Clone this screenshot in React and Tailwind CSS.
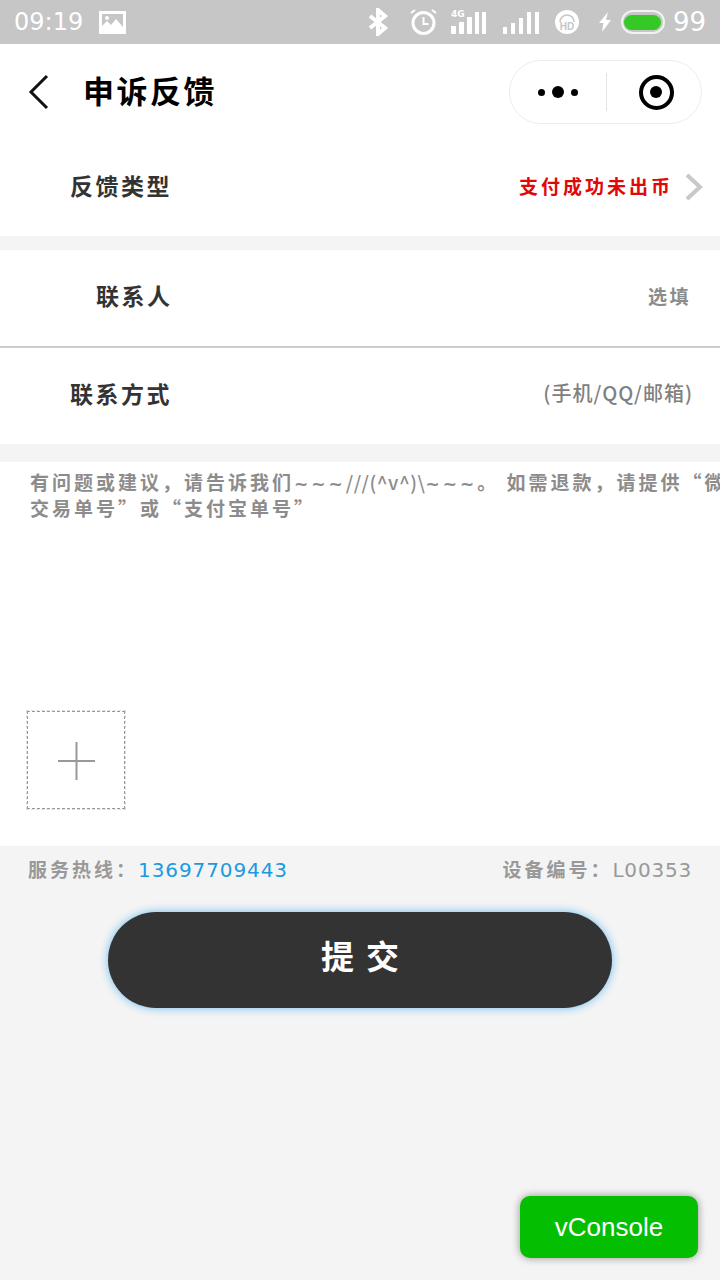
import React from "react";

const cjk = "font-['Noto_Sans_CJK_SC','Liberation_Sans',sans-serif]";
const latin = "font-['DejaVu_Sans','Liberation_Sans',sans-serif]";

const StatusIcons = () => (
  <div className="ml-auto flex items-center pr-[14px]">
    {/* bluetooth */}
    <svg width="20" height="28" viewBox="0 0 20 28" fill="none" stroke="#fff" strokeWidth="4">
      <path d="M2 8l15 12-7 6V2l7 6L2 20" />
    </svg>
    {/* alarm */}
    <svg width="27" height="28" viewBox="0 0 27 28" className="ml-[22px]" fill="none" stroke="#fff">
      <circle cx="13.5" cy="15" r="10.5" strokeWidth="3" />
      <path d="M13.5 9v7h5" strokeWidth="2" />
      <path d="M1 5l4-3M26 5l-4-3" strokeWidth="2" />
    </svg>
    {/* 4G signal */}
    <div className="relative ml-[14px] flex h-[24px] w-[38px] items-end gap-[3px]">
      <span className={`absolute left-0 top-[-2px] text-[9px] font-bold leading-[12px] text-white ${latin}`}>4G</span>
      <span className="h-[8px] w-[5px] bg-white"></span>
      <span className="h-[12px] w-[5px] bg-white"></span>
      <span className="h-[17px] w-[5px] bg-white"></span>
      <span className="h-[22px] w-[4px] bg-white"></span>
      <span className="h-[22px] w-[4px] bg-white"></span>
    </div>
    {/* signal */}
    <div className="ml-[14px] flex h-[24px] w-[36px] items-end gap-[4px]">
      <span className="h-[7px] w-[4px] bg-white"></span>
      <span className="h-[11px] w-[4px] bg-white"></span>
      <span className="h-[16px] w-[4px] bg-white"></span>
      <span className="h-[22px] w-[4px] bg-white"></span>
      <span className="h-[22px] w-[4px] bg-white"></span>
    </div>
    {/* HD call */}
    <svg width="24" height="24" viewBox="0 0 24 24" className="ml-[16px]">
      <circle cx="12" cy="12" r="12" fill="#fff" />
      <path d="M5 12a7 7 0 0 1 14 0" fill="none" stroke="#c6c6c6" strokeWidth="1.6" />
      <text x="12" y="20" textAnchor="middle" fontSize="10" fontWeight="700" fontFamily="Liberation Sans" fill="#c6c6c6">HD</text>
    </svg>
    {/* charging */}
    <svg width="12" height="20" viewBox="0 0 12 20" className="ml-[20px]" fill="#fff">
      <path d="M9 0L0 11h4.5L3 20l9-12H7z" />
    </svg>
    <div className="ml-[10px] flex h-[24px] w-[44px] items-center justify-center rounded-full border-2 border-[#eef4ee]">
      <div className="h-[15px] w-[37px] rounded-full bg-[#35c928]"></div>
    </div>
    <span className={`ml-[8px] text-[26px] leading-none text-white ${latin}`}>99</span>
  </div>
);

const Row = ({ label, labelPad, value, valueClass, pr, children }) => (
  <div className="flex h-[96px] items-center justify-between bg-white">
    <span className={`${labelPad} pb-[6px] text-[23px] font-bold leading-none tracking-[2.5px] text-[#333]`}>{label}</span>
    <div className={`flex items-center ${pr}`}>
      <span className={`pb-[6px] ${valueClass}`}>{value}</span>
      {children}
    </div>
  </div>
);

const Tildes = () => <span className={`text-[17px] leading-none ${latin}`}>~~~</span>;

export default function App() {
  return (
    <div className={`flex h-[1280px] w-[720px] flex-col overflow-hidden bg-[#f4f4f4] ${cjk}`}>
      <div className="flex h-[44px] shrink-0 items-center bg-[#c6c6c6] pl-[14px]">
        <span className={`w-[72px] shrink-0 text-[24px] leading-none text-white ${latin}`}>09:19</span>
        <svg width="27" height="23" viewBox="0 0 27 23" className="ml-[13px] shrink-0">
          <path fillRule="evenodd" fill="#fff" d="M0 0h27v23H0zM3 3v12l5-5 4 4 5-6 7 8V3z" />
          <circle cx="8" cy="7" r="2" fill="#fff" />
        </svg>
        <StatusIcons />
      </div>

      <div className="flex h-[96px] shrink-0 items-center bg-white">
        <svg width="24" height="36" viewBox="0 0 24 36" className="ml-[27px]" fill="none" stroke="#111" strokeWidth="3">
          <path d="M20 2L4 18l16 16" />
        </svg>
        <span className="ml-[32px] pb-[6px] text-[31px] font-bold leading-none tracking-[2.5px] text-black">申诉反馈</span>
        <div className="ml-auto mr-[18px] flex h-[64px] w-[193px] items-center rounded-full border border-[#ececec] bg-white">
          <div className="flex w-[96px] items-center justify-center gap-[7px]">
            <span className="h-[7px] w-[7px] rounded-full bg-black"></span>
            <span className="h-[12px] w-[12px] rounded-full bg-black"></span>
            <span className="h-[7px] w-[7px] rounded-full bg-black"></span>
          </div>
          <div className="h-[38px] w-px bg-[#e4e4e4]"></div>
          <div className="flex flex-1 items-center justify-center pl-[4px]">
            <div className="flex h-[35px] w-[35px] items-center justify-center rounded-full border-[4px] border-black">
              <span className="h-[12px] w-[12px] rounded-full bg-black"></span>
            </div>
          </div>
        </div>
      </div>

      <Row
        label="反馈类型"
        labelPad="pl-[70px]"
        value="支付成功未出币"
        valueClass="text-[19px] font-bold leading-none tracking-[3px] text-[#e00808]"
        pr="pr-[16px]"
      >
        <svg width="20" height="28" viewBox="0 0 20 28" className="mb-[2px] ml-[11px]" fill="none" stroke="#c8c8c8" strokeWidth="4">
          <path d="M3 2l13 12L3 26" />
        </svg>
      </Row>

      <div className="mt-[14px]">
        <Row
          label="联系人"
          labelPad="pl-[96px]"
          value="选填"
          valueClass="text-[19px] font-bold leading-none tracking-[2.5px] text-[#8c8c8c]"
          pr="pr-[29px]"
        />
      </div>
      <div className="h-[2px] bg-[#cdcdcd]"></div>
      <Row
        label="联系方式"
        labelPad="pl-[70px]"
        value="(手机/QQ/邮箱)"
        valueClass="text-[20px] font-medium leading-none tracking-[1px] text-[#808080]"
        pr="pr-[27px]"
      />

      <div className="mt-[18px] flex h-[384px] flex-col bg-white">
        <div className="h-[62px] overflow-hidden pl-[30px] pt-[7px]">
          <p className="w-[725px] text-[19px] font-bold leading-[26px] tracking-[3px] text-[#8c8c8c]">
            有问题或建议，请告诉我们<Tildes />
            <span className="font-medium tracking-[0.5px]">///(^v^)\</span>
            <Tildes />。 如需退款，请提供“微信交易单号”或“支付宝单号”
          </p>
        </div>
        <div className="ml-[27px] mt-[187px] flex h-[98px] w-[98px] items-center justify-center border border-dashed border-[#999] pt-[2px] outline-1 outline-dashed outline-[#ddd]">
          <svg width="37" height="38" viewBox="0 0 37 38" stroke="#999" strokeWidth="2">
            <path d="M18.5 0v38M0 19h37" />
          </svg>
        </div>
      </div>

      <div className="flex h-[50px] items-center justify-between px-[28px] pb-[4px] text-[19px] font-bold leading-none text-[#999]">
        <span className="tracking-[3px]">
          服务热线：
          <span className={`text-[20px] font-normal tracking-[0.9px] text-[#1a9ae0] ${latin}`}>13697709443</span>
        </span>
        <span className="tracking-[3px]">
          设备编号：
          <span className={`text-[20px] font-normal tracking-[0.8px] ${latin}`}>L00353</span>
        </span>
      </div>

      <div className="mt-[16px] flex justify-center">
        <button className="flex h-[96px] w-[504px] items-center justify-center rounded-full bg-[#333] pb-[10px] pl-[12px] text-[33px] font-bold leading-none tracking-[12px] text-white shadow-[0_0_10px_#6bbcf0]">
          提交
        </button>
      </div>

      {/* vConsole floats over the page */}
      <button className="absolute left-[520px] top-[1196px] flex h-[62px] w-[178px] items-center justify-center rounded-[10px] bg-[#04be02] font-['Liberation_Sans',sans-serif] text-[26px] text-white shadow-[0_0_8px_rgba(0,0,0,0.4)]">
        vConsole
      </button>
    </div>
  );
}
